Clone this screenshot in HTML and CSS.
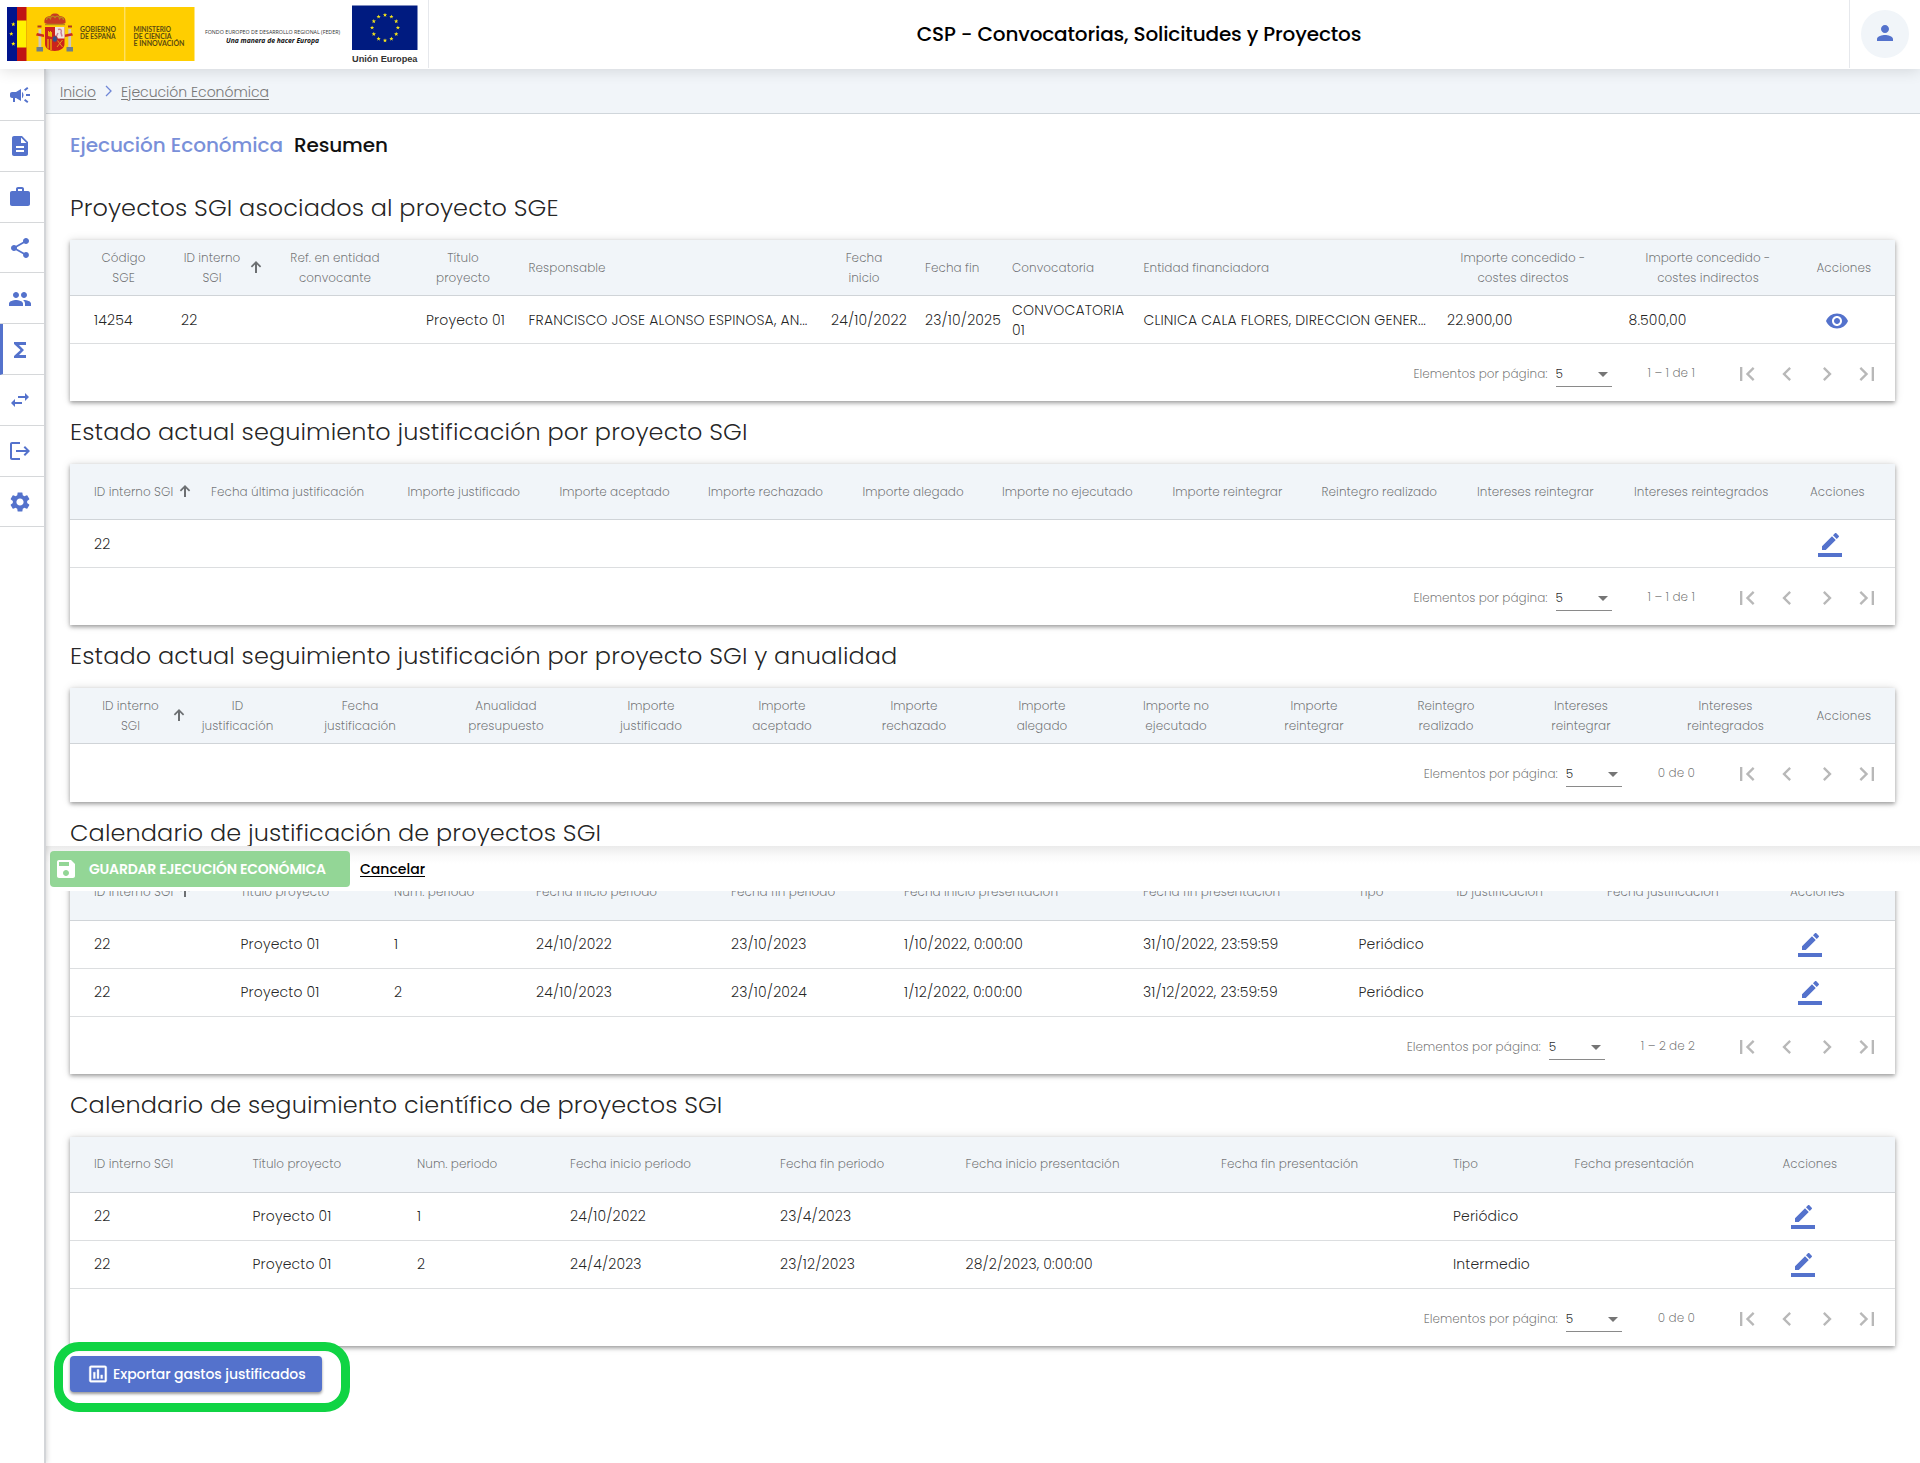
FILE: index.html
```html
<!DOCTYPE html>
<html lang="es">
<head>
<meta charset="utf-8">
<title>CSP - Convocatorias, Solicitudes y Proyectos</title>
<link rel="stylesheet" href="styles.css">
</head>
<body>
<svg class="defs" width="0" height="0">
  <symbol id="i-edit" viewBox="0 0 24 24"><path d="M17.75 7L14 3.25l-10 10V17h3.75l10-10zm2.96-2.96c.39-.39.39-1.02 0-1.41L18.37.29c-.39-.39-1.02-.39-1.41 0L15 2.25 18.75 6l1.96-1.96zM0 20h24v4H0z"/></symbol>
  <symbol id="i-eye" viewBox="0 0 24 24"><path d="M12 4.500C7 4.500 2.730 7.610 1 12c1.730 4.390 6 7.500 11 7.500s9.270-3.110 11-7.500c-1.730-4.390-6-7.500-11-7.500zM12 17c-2.760 0-5-2.240-5-5s2.240-5 5-5 5 2.240 5 5-2.240 5-5 5zm0-8c-1.660 0-3 1.340-3 3s1.340 3 3 3 3-1.340 3-3-1.340-3-3-3z"/></symbol>
  <symbol id="i-up" viewBox="0 0 12 12"><path d="M5 12V3.600L2 6.500.8 5.300 6 0l5.200 5.300L10 6.500 7 3.600V12z"/></symbol>
  <symbol id="i-first" viewBox="0 0 24 24"><path d="M18.410 16.590L13.820 12l4.590-4.590L17 6l-6 6 6 6zM6 6h2v12H6z"/></symbol>
  <symbol id="i-prev" viewBox="0 0 24 24"><path d="M15.410 7.410L14 6l-6 6 6 6 1.410-1.410L10.830 12z"/></symbol>
  <symbol id="i-next" viewBox="0 0 24 24"><path d="M10 6L8.590 7.410 13.170 12l-4.580 4.590L10 18l6-6z"/></symbol>
  <symbol id="i-last" viewBox="0 0 24 24"><path d="M5.590 7.410L10.180 12l-4.590 4.590L7 18l6-6-6-6zM16 6h2v12h-2z"/></symbol>
  <symbol id="i-star" viewBox="-10 -10 20 20"><path d="M0-10L2.400-3.200 9.500-3.100 3.800 1.200 5.900 8.100 0 4-5.900 8.100-3.800 1.200-9.500-3.100-2.400-3.200z"/></symbol>
</svg>

<header class="topbar">
  <svg class="logos" width="428" height="68" viewBox="0 0 428 68">
    <rect x="7" y="7" width="187.500" height="54" fill="#ffce00"/>
    <rect x="7" y="7" width="10" height="54" fill="#00148c"/>
    <rect x="17" y="7" width="9.500" height="54" fill="#c01414"/>
    <rect x="17" y="20.500" width="9.500" height="27" fill="#fff200"/>
    <g fill="#fff200"><use href="#i-star" x="11" y="22" width="4.600" height="4.600"/><use href="#i-star" x="9" y="31.600" width="4.600" height="4.600"/><use href="#i-star" x="11" y="41.500" width="4.600" height="4.600"/></g>
    <rect x="124.300" y="7" width="1" height="54" fill="#ffe88a"/>
    <g class="arms">
      <path d="M44.500 23c-1-7 5-6.500 6-7 .5-1 1-2.500 4.500-2.500s4 1.500 4.500 2.500c1 .5 7 0 6 7-4 2-17 2-21 0z" fill="#c83a22"/>
      <path d="M45 24.500h20M46.500 20c0-3 2.500-3.500 4-1.500.5-3 3-3 4.500-1 1.500-2 4-2 4.500 1 1.500-2 4-1.500 4 1.500" fill="none" stroke="#b98a1c" stroke-width="1.300"/>
      <path d="M37.500 25.500h4v2h-4zM68 25.500h4v2h-4z" fill="#b33a20"/>
      <path d="M38.500 29h2.800v18h-2.800zM68.300 29h2.800v18h-2.800z" fill="#cfc7bd"/>
      <path d="M37 33l7 1.500v2.500l-8-1.500zM72 33l-7 1.500v2.500l8-1.500z" fill="#d02a1e"/>
      <path d="M36.500 47h6.500v4.500h-6.500zM66.500 47h6.500v4.500h-6.500z" fill="#6f7f86"/>
      <path d="M45 27h19.500v17c0 4-4 7-9.800 7S45 48 45 44z" fill="#cc231c"/>
      <path d="M55 27h9.500v11.500H55z" fill="#eee3df"/>
      <path d="M58 29.500c3-1 4 1 3 3l1 4M58 33l-1.500 3" stroke="#c88199" fill="none" stroke-width="1.500"/>
      <path d="M48 36v-5h1v1h1v-1h1v1h1v5z" fill="#f0b400"/>
      <path d="M48 39v9.500M51 39v11" stroke="#f0b400" stroke-width="1.300"/>
      <path d="M57 40l5.500 7M62.500 40L57 47" stroke="#e39a1c" stroke-width="1"/>
      <ellipse cx="54.800" cy="39" rx="2.600" ry="3.200" fill="#31508f" stroke="#c8281c" stroke-width=".8"/>
    </g>
    <g class="gov">
      <text x="80" y="31.500" textLength="36" lengthAdjust="spacingAndGlyphs">GOBIERNO</text>
      <text x="80" y="38.500" textLength="35.500" lengthAdjust="spacingAndGlyphs">DE ESPAÑA</text>
      <text x="133.500" y="31.500" textLength="37.500" lengthAdjust="spacingAndGlyphs">MINISTERIO</text>
      <text x="133.500" y="38.500" textLength="38" lengthAdjust="spacingAndGlyphs">DE CIENCIA</text>
      <text x="133.500" y="45.500" textLength="51" lengthAdjust="spacingAndGlyphs">E INNOVACIÓN</text>
    </g>
    <text class="feder" x="205" y="34" textLength="135" lengthAdjust="spacingAndGlyphs">FONDO EUROPEO DE DESARROLLO REGIONAL (FEDER)</text>
    <text class="una" x="226" y="42.500" textLength="93" lengthAdjust="spacingAndGlyphs">Una manera de hacer Europa</text>
    <rect x="352" y="5.500" width="65.500" height="44.500" fill="#001b80"/>
    <g fill="#f5e51b">
      <use href="#i-star" x="382.700" y="12.700" width="4.600" height="4.600"/><use href="#i-star" x="389.100" y="14.400" width="4.600" height="4.600"/><use href="#i-star" x="393.900" y="19" width="4.600" height="4.600"/><use href="#i-star" x="395.600" y="25.400" width="4.600" height="4.600"/><use href="#i-star" x="393.900" y="31.800" width="4.600" height="4.600"/><use href="#i-star" x="389.100" y="36.500" width="4.600" height="4.600"/><use href="#i-star" x="382.700" y="38.200" width="4.600" height="4.600"/><use href="#i-star" x="376.300" y="36.500" width="4.600" height="4.600"/><use href="#i-star" x="371.500" y="31.800" width="4.600" height="4.600"/><use href="#i-star" x="369.800" y="25.400" width="4.600" height="4.600"/><use href="#i-star" x="371.500" y="19" width="4.600" height="4.600"/><use href="#i-star" x="376.300" y="14.400" width="4.600" height="4.600"/>
    </g>
    <text class="ue" x="352" y="62.300" textLength="65.500" lengthAdjust="spacingAndGlyphs">Unión Europea</text>
  </svg>
  <h1 class="app-title">CSP - Convocatorias, Solicitudes y Proyectos</h1>
  <div class="user"><span class="avatar"><svg viewBox="0 0 24 24"><path d="M12 12c2.210 0 4-1.790 4-4s-1.790-4-4-4-4 1.790-4 4 1.790 4 4 4zm0 2c-2.670 0-8 1.340-8 4v2h16v-2c0-2.660-5.330-4-8-4z"/></svg></span></div>
</header>

<div class="shell">
<nav class="side">
  <a><svg viewBox="0 0 24 24"><path d="M18 11v2h4v-2h-4zm-2 6.610c.96.710 2.210 1.650 3.200 2.390.4-.53.8-1.070 1.200-1.600-.99-.74-2.240-1.680-3.200-2.400-.4.540-.8 1.080-1.200 1.610zM20.400 5.600c-.4-.53-.8-1.070-1.200-1.600-.99.740-2.240 1.680-3.200 2.400.4.530.8 1.070 1.200 1.600.96-.72 2.210-1.650 3.200-2.400zM4 9c-1.100 0-2 .9-2 2v2c0 1.100.9 2 2 2h1v4h2v-4h1l5 3V6L8 9H4zm11.500 3c0-1.330-.58-2.530-1.500-3.350v6.690c.92-.81 1.500-2.010 1.500-3.340z"/></svg></a>
  <a><svg viewBox="0 0 24 24"><path d="M14 2H6c-1.100 0-1.990.9-1.990 2L4 20c0 1.100.89 2 1.990 2H18c1.100 0 2-.9 2-2V8l-6-6zm2 16H8v-2h8v2zm0-4H8v-2h8v2zm-3-5V3.500L18.500 9H13z"/></svg></a>
  <a><svg viewBox="0 0 24 24"><path d="M20 6h-4V4c0-1.110-.89-2-2-2h-4c-1.110 0-2 .89-2 2v2H4c-1.110 0-1.990.89-1.990 2L2 19c0 1.110.89 2 2 2h16c1.110 0 2-.89 2-2V8c0-1.110-.89-2-2-2zm-6 0h-4V4h4v2z"/></svg></a>
  <a><svg viewBox="0 0 24 24"><path d="M18 16.080c-.76 0-1.440.3-1.960.77L8.910 12.700c.05-.23.09-.46.09-.7s-.04-.47-.09-.7l7.050-4.110c.54.5 1.250.81 2.040.81 1.660 0 3-1.340 3-3s-1.340-3-3-3-3 1.340-3 3c0 .24.040.47.090.7L8.040 9.810C7.500 9.310 6.790 9 6 9c-1.660 0-3 1.340-3 3s1.340 3 3 3c.79 0 1.500-.31 2.040-.81l7.120 4.160c-.05.21-.08.43-.08.650 0 1.610 1.310 2.920 2.920 2.920s2.920-1.310 2.920-2.920-1.310-2.920-2.920-2.920z"/></svg></a>
  <a><svg viewBox="0 0 24 24"><path d="M16 11c1.660 0 2.990-1.340 2.990-3S17.660 5 16 5s-3 1.340-3 3 1.340 3 3 3zm-8 0c1.660 0 2.990-1.340 2.990-3S9.660 5 8 5 5 6.340 5 8s1.340 3 3 3zm0 2c-2.330 0-7 1.170-7 3.500V19h14v-2.500c0-2.330-4.670-3.500-7-3.500zm8 0c-.29 0-.62.020-.97.050 1.160.84 1.970 1.970 1.970 3.450V19h6v-2.500c0-2.330-4.670-3.500-7-3.500z"/></svg></a>
  <a class="on"><svg viewBox="0 0 24 24"><path d="M18 4H6v2l6.500 6L6 18v2h12v-3h-7l5-5-5-5h7z"/></svg></a>
  <a><svg viewBox="0 0 24 24"><path d="M6.990 11L3 15l3.990 4v-3H14v-2H6.990v-3zM21 9l-3.990-4v3H10v2h7.010v3L21 9z"/></svg></a>
  <a><svg viewBox="0 0 24 24"><path d="M17 7l-1.410 1.410L18.170 11H8v2h10.170l-2.580 2.580L17 17l5-5zM4 5h8V3H4c-1.100 0-2 .9-2 2v14c0 1.100.9 2 2 2h8v-2H4V5z"/></svg></a>
  <a><svg viewBox="0 0 24 24"><path d="M19.140 12.940c.04-.3.060-.61.060-.94s-.02-.64-.07-.94l2.030-1.580c.18-.14.230-.41.120-.61l-1.920-3.320c-.12-.22-.37-.29-.59-.22l-2.390.96c-.5-.38-1.030-.7-1.620-.94l-.36-2.540c-.04-.24-.24-.41-.48-.41h-3.840c-.24 0-.43.170-.47.410l-.36 2.540c-.59.240-1.130.57-1.620.94l-2.390-.96c-.22-.08-.47 0-.59.220L2.740 8.870c-.12.210-.08.470.12.610l2.030 1.580c-.05.3-.09.630-.09.940s.02.640.07.940l-2.030 1.580c-.18.140-.23.410-.12.610l1.920 3.320c.12.220.37.290.59.220l2.390-.96c.5.380 1.030.7 1.620.94l.36 2.540c.05.240.24.410.48.410h3.840c.24 0 .44-.17.470-.41l.36-2.540c.59-.24 1.130-.56 1.620-.94l2.390.96c.22.080.47 0 .59-.22l1.920-3.320c.12-.22.070-.47-.12-.61l-2.010-1.580zM12 15.600c-1.980 0-3.600-1.620-3.600-3.600s1.620-3.600 3.600-3.600 3.600 1.620 3.600 3.600-1.620 3.600-3.600 3.600z"/></svg></a>
</nav>

<main class="main">
  <div class="crumbs"><a>Inicio</a><svg width="7" height="12" viewBox="0 0 7 12"><path d="M1 1l5 5-5 5"/></svg><a>Ejecución Económica</a></div>
  <div class="content">
    <div class="page-title"><span class="lead">Ejecución Económica</span><span class="sub">Resumen</span></div>

    <h2>Proyectos SGI asociados al proyecto SGE</h2>
    <section class="card t1">
      <div class="row head">
        <span class="two">Código<br>SGE</span>
        <span class="two">ID interno<br>SGI</span>
        <span class="two">Ref. en entidad<br>convocante</span>
        <span class="two">Título<br>proyecto</span>
        <span>Responsable</span>
        <span class="two">Fecha<br>inicio</span>
        <span>Fecha fin</span><span>Convocatoria</span><span>Entidad financiadora</span>
        <span class="two">Importe concedido -<br>costes directos</span>
        <span class="two">Importe concedido -<br>costes indirectos</span>
        <span>Acciones</span>
        <svg class="sort"><use href="#i-up"/></svg>
      </div>
      <div class="row">
        <span>14254</span><span>22</span><span></span><span>Proyecto 01</span><span>FRANCISCO JOSE ALONSO ESPINOSA, AN...</span><span>24/10/2022</span><span>23/10/2025</span><span>CONVOCATORIA<br>01</span><span>CLINICA CALA FLORES, DIRECCION GENER...</span><span>22.900,00</span><span>8.500,00</span><span><svg class="act"><use href="#i-eye"/></svg></span>
      </div>
      <div class="pager"><span>Elementos por página:</span><span class="select">5<i></i></span><span class="range">1 – 1 de 1</span><svg><use href="#i-first"/></svg><svg><use href="#i-prev"/></svg><svg><use href="#i-next"/></svg><svg><use href="#i-last"/></svg></div>
    </section>

    <h2>Estado actual seguimiento justificación por proyecto SGI</h2>
    <section class="card t2">
      <div class="row head">
        <span>ID interno SGI <svg class="sort-in"><use href="#i-up"/></svg></span><span>Fecha última justificación</span><span>Importe justificado</span><span>Importe aceptado</span><span>Importe rechazado</span><span>Importe alegado</span><span>Importe no ejecutado</span><span>Importe reintegrar</span><span>Reintegro realizado</span><span>Intereses reintegrar</span><span>Intereses reintegrados</span><span>Acciones</span>
      </div>
      <div class="row">
        <span>22</span><span></span><span></span><span></span><span></span><span></span><span></span><span></span><span></span><span></span><span></span><span><svg class="act"><use href="#i-edit"/></svg></span>
      </div>
      <div class="pager"><span>Elementos por página:</span><span class="select">5<i></i></span><span class="range">1 – 1 de 1</span><svg><use href="#i-first"/></svg><svg><use href="#i-prev"/></svg><svg><use href="#i-next"/></svg><svg><use href="#i-last"/></svg></div>
    </section>

    <h2>Estado actual seguimiento justificación por proyecto SGI y anualidad</h2>
    <section class="card t3">
      <div class="row head">
        <span class="two">ID interno<br>SGI</span><span class="two">ID<br>justificación</span><span class="two">Fecha<br>justificación</span><span class="two">Anualidad<br>presupuesto</span><span class="two">Importe<br>justificado</span><span class="two">Importe<br>aceptado</span><span class="two">Importe<br>rechazado</span><span class="two">Importe<br>alegado</span><span class="two">Importe no<br>ejecutado</span><span class="two">Importe<br>reintegrar</span><span class="two">Reintegro<br>realizado</span><span class="two">Intereses<br>reintegrar</span><span class="two">Intereses<br>reintegrados</span><span>Acciones</span>
        <svg class="sort"><use href="#i-up"/></svg>
      </div>
      <div class="pager"><span>Elementos por página:</span><span class="select">5<i></i></span><span class="range">0 de 0</span><svg><use href="#i-first"/></svg><svg><use href="#i-prev"/></svg><svg><use href="#i-next"/></svg><svg><use href="#i-last"/></svg></div>
    </section>

    <h2>Calendario de justificación de proyectos SGI</h2>
    <section class="card t4">
      <div class="row head">
        <span>ID interno SGI <svg class="sort-in"><use href="#i-up"/></svg></span><span>Título proyecto</span><span>Num. periodo</span><span>Fecha inicio periodo</span><span>Fecha fin periodo</span><span>Fecha inicio presentación</span><span>Fecha fin presentación</span><span>Tipo</span><span>ID justificación</span><span>Fecha justificación</span><span>Acciones</span>
      </div>
      <div class="row">
        <span>22</span><span>Proyecto 01</span><span>1</span><span>24/10/2022</span><span>23/10/2023</span><span>1/10/2022, 0:00:00</span><span>31/10/2022, 23:59:59</span><span>Periódico</span><span></span><span></span><span><svg class="act"><use href="#i-edit"/></svg></span>
      </div>
      <div class="row">
        <span>22</span><span>Proyecto 01</span><span>2</span><span>24/10/2023</span><span>23/10/2024</span><span>1/12/2022, 0:00:00</span><span>31/12/2022, 23:59:59</span><span>Periódico</span><span></span><span></span><span><svg class="act"><use href="#i-edit"/></svg></span>
      </div>
      <div class="pager"><span>Elementos por página:</span><span class="select">5<i></i></span><span class="range">1 – 2 de 2</span><svg><use href="#i-first"/></svg><svg><use href="#i-prev"/></svg><svg><use href="#i-next"/></svg><svg><use href="#i-last"/></svg></div>
    </section>

    <h2>Calendario de seguimiento científico de proyectos SGI</h2>
    <section class="card t5">
      <div class="row head">
        <span>ID interno SGI</span><span>Título proyecto</span><span>Num. periodo</span><span>Fecha inicio periodo</span><span>Fecha fin periodo</span><span>Fecha inicio presentación</span><span>Fecha fin presentación</span><span>Tipo</span><span>Fecha presentación</span><span>Acciones</span>
      </div>
      <div class="row">
        <span>22</span><span>Proyecto 01</span><span>1</span><span>24/10/2022</span><span>23/4/2023</span><span></span><span></span><span>Periódico</span><span></span><span><svg class="act"><use href="#i-edit"/></svg></span>
      </div>
      <div class="row">
        <span>22</span><span>Proyecto 01</span><span>2</span><span>24/4/2023</span><span>23/12/2023</span><span>28/2/2023, 0:00:00</span><span></span><span>Intermedio</span><span></span><span><svg class="act"><use href="#i-edit"/></svg></span>
      </div>
      <div class="pager"><span>Elementos por página:</span><span class="select">5<i></i></span><span class="range">0 de 0</span><svg><use href="#i-first"/></svg><svg><use href="#i-prev"/></svg><svg><use href="#i-next"/></svg><svg><use href="#i-last"/></svg></div>
    </section>

    <div class="export">
      <button class="btn-export"><svg viewBox="0 0 24 24"><path d="M9 17H7v-7h2v7zm4 0h-2V7h2v10zm4 0h-2v-4h2v4zm2.500 2.100h-15V5h15v14.100zm0-16.100h-15c-1.100 0-2 .9-2 2v14c0 1.100.9 2 2 2h15c1.100 0 2-.9 2-2V5c0-1.100-.9-2-2-2z"/></svg>Exportar gastos justificados</button>
      <div class="marker"></div>
    </div>
  </div>

  <div class="actionbar">
    <button class="btn-save"><svg viewBox="0 0 24 24"><path d="M17 3H5c-1.110 0-2 .9-2 2v14c0 1.100.89 2 2 2h14c1.100 0 2-.9 2-2V7l-4-4zm-5 16c-1.660 0-3-1.340-3-3s1.340-3 3-3 3 1.340 3 3-1.340 3-3 3zm3-10H5V5h10v4z"/></svg>GUARDAR EJECUCIÓN ECONÓMICA</button>
    <a class="cancel">Cancelar</a>
  </div>
</main>
</div>
</body>
</html>
```
FILE: styles.css
```css
* { box-sizing: border-box; }
body {
  margin: 0;
  height: 1463px;
  overflow: hidden;
  background: #fff;
  color: rgba(0, 0, 0, .87);
  font-family: Poppins, Inter, sans-serif;
  font-weight: 300;
  font-size: 14px;
}
.defs { position: absolute; }

/* Top bar */
.topbar {
  position: relative;
  z-index: 3;
  display: flex;
  align-items: stretch;
  height: 69px;
  background: #fff;
  box-shadow: 0 2px 14px rgba(0, 0, 0, .12);
}
.logos { flex: none; }
.app-title {
  flex: 1;
  margin: 0 0 1px;
  border: solid #e6e8ec;
  border-width: 0 1px;
  color: #000;
  font-size: 20px;
  font-weight: 500;
  letter-spacing: -.14px;
  line-height: 69px;
  text-align: center;
}
.user { width: 70px; display: flex; justify-content: center; padding-top: 10px; }
.avatar {
  display: flex;
  align-items: center;
  justify-content: center;
  width: 48px;
  height: 48px;
  border-radius: 50%;
  background: #f1f5f9;
}
.avatar svg { width: 24px; height: 24px; fill: #5472cc; margin-bottom: 2px; }
.gov text { font: 700 6.600px Lato, sans-serif; fill: #5a4a10; }
.feder { font: 500 5.400px "Open Sans", sans-serif; fill: #333; }
.una { font: italic 700 6.600px "Open Sans", sans-serif; fill: #111; }
.ue { font: 700 9.400px "Liberation Sans", sans-serif; fill: #333; }

/* Side navigation */
.shell { display: flex; height: 1394px; }
.side {
  position: relative;
  z-index: 1;
  width: 46px;
  flex: none;
  border-right: 2px solid #d3d5d8;
  background: #fff;
  box-shadow: 1px 0 5px rgba(0, 0, 0, .16);
}
.side a {
  display: flex;
  align-items: center;
  height: 50.800px;
  padding: 1px 0 0 8px;
  border-bottom: 1px solid #d6d8da;
}
.side a:first-child { height: 52px; }
.side a.on { border-left: 3px solid #5472cc; padding-left: 5px; }
.side svg { width: 24px; height: 24px; fill: #5472cc; }

/* Page */
.main { position: relative; flex: 1; min-width: 0; }
.crumbs {
  display: flex;
  align-items: center;
  gap: 9px;
  height: 45px;
  padding: 0 0 0 14px;
  border-bottom: 1px solid #d0d6db;
  background: #f1f5f9;
  color: #777;
}
.crumbs a { text-decoration: underline; text-underline-offset: 2px; margin-top: 2px; }
.crumbs svg { fill: none; stroke: #6f86d6; stroke-width: 1.300; }
.content { padding: 0 25px 0 24px; }
.page-title {
  display: flex;
  gap: 11px;
  height: 63px;
  font-size: 20px;
  font-weight: 500;
  line-height: 62px;
}
.lead { color: #7990d9; letter-spacing: -.05px; }
.sub { color: #111; letter-spacing: -.12px; }
h2 {
  margin: 0;
  height: 63px;
  font-size: 24px;
  font-weight: 300;
  letter-spacing: .1px;
  line-height: 61px;
  white-space: nowrap;
}

/* Table cards */
.card {
  background: #fff;
  box-shadow: 0 2px 4px rgba(0, 0, 0, .34), 0 0 9px rgba(0, 0, 0, .12);
}
.row {
  position: relative;
  display: grid;
  align-items: center;
  height: 48px;
  padding-left: 24px;
  border-bottom: 1px solid #dcdee0;
  line-height: 20px;
  letter-spacing: .15px;
  white-space: nowrap;
}
.row.head {
  height: 56px;
  background: #f1f5f9;
  border-color: #d0d4d8;
  color: rgba(0, 0, 0, .54);
  font-size: 12px;
  letter-spacing: .05px;
}
.t4 .row, .t5 .row { padding-bottom: 1px; }
.two { text-align: center; width: 90px; }
.t1 .row { grid-template-columns: 87px 109px 136px 102.500px 302.500px 94px 87px 131.500px 303.500px 181.500px 188px 78.500px; }
.t2 .row { grid-template-columns: 117px 196.500px 152px 148.500px 154.500px 139.500px 170.500px 149px 155.500px 157px 176px 85px; }
.t3 .row { grid-template-columns: 98.500px 122.500px 146px 145px 131px 132px 128px 134px 138px 132px 135px 144.500px 136px 78.500px; }
.t4 .row { grid-template-columns: 146.500px 153.500px 142px 195px 173px 239px 215.500px 98px 150.500px 183px 105px; }
.t5 .row { grid-template-columns: 158.500px 164.500px 153px 210px 185.500px 255.500px 232px 121.500px 208px 112.500px; }
.t1 .two:nth-child(1) { width: 59px; }
.t1 .two:nth-child(2) { width: 62px; }
.t1 .two:nth-child(4) { width: 74px; }
.t1 .two:nth-child(6) { width: 66px; }
.t1 .two:nth-child(10) { width: 152px; }
.t1 .two:nth-child(11) { width: 159px; }
.t3 .two:nth-child(1) { width: 73px; }
.sort, .sort-in { width: 12px; height: 12px; fill: #6c6f72; }
.sort { position: absolute; left: 180px; top: 21px; }
.t3 .sort { left: 103px; }
.sort-in { vertical-align: -1px; margin-left: 2px; }
.act { display: block; width: 24px; height: 24px; margin: 2px 0 0 8px; fill: #5472cc; }

/* Paginator */
.pager {
  display: flex;
  justify-content: flex-end;
  align-items: center;
  height: 57px;
  padding: 3px 8px 0 0;
  color: rgba(0, 0, 0, .54);
  font-size: 12px;
  letter-spacing: .04px;
}
.t3 .pager { height: 58px; padding-bottom: 1px; }
.select {
  display: flex;
  align-items: center;
  justify-content: space-between;
  width: 56px;
  height: 25px;
  margin: 1px 36px 0 8px;
  border-bottom: 1px solid #8a8a8a;
  color: rgba(0, 0, 0, .87);
}
.select i { margin-right: 4px; border: 5px solid transparent; border-top-color: #757575; border-bottom: 0; }
.range { margin: -2px 32px 0 0; }
.pager svg { width: 40px; height: 28px; fill: #b8b8b8; }

/* Export button and its highlight */
.export { position: relative; padding-top: 10px; }
button { display: flex; align-items: center; border: 0; color: #fff; font: 500 14px Poppins, Inter, sans-serif; }
.btn-export {
  width: 252px;
  height: 36px;
  padding: 0 0 0 17px;
  gap: 4px;
  border-radius: 4px;
  background: #5472cc;
  box-shadow: 0 2px 3px rgba(0, 0, 0, .4);
  letter-spacing: -.08px;
  white-space: nowrap;
}
.btn-export svg { width: 22px; height: 22px; fill: #fff; stroke: #fff; stroke-width: .4; }
.marker {
  position: absolute;
  left: -16px;
  top: -4px;
  width: 296px;
  height: 70px;
  border: 9px solid #10d444;
  border-radius: 25px;
}

/* Floating action bar */
.actionbar {
  position: absolute;
  left: 0;
  right: 0;
  top: 777px;
  height: 45px;
  display: flex;
  align-items: flex-start;
  padding: 5px 0 0 4px;
  background: linear-gradient(#ebebeb, #fafafa 10px, #fff 18px);
}
.btn-save {
  width: 300px;
  height: 36px;
  padding: 0 0 0 4px;
  gap: 11px;
  border-radius: 4px;
  background: #93d696;
  font-weight: 600;
  letter-spacing: -.2px;
  white-space: nowrap;
}
.btn-save svg { width: 24px; height: 24px; fill: #fff; }
.cancel { margin: 0 0 0 10px; color: #000; font-weight: 500; line-height: 36px; text-decoration: underline; text-underline-offset: 2px; }
```
